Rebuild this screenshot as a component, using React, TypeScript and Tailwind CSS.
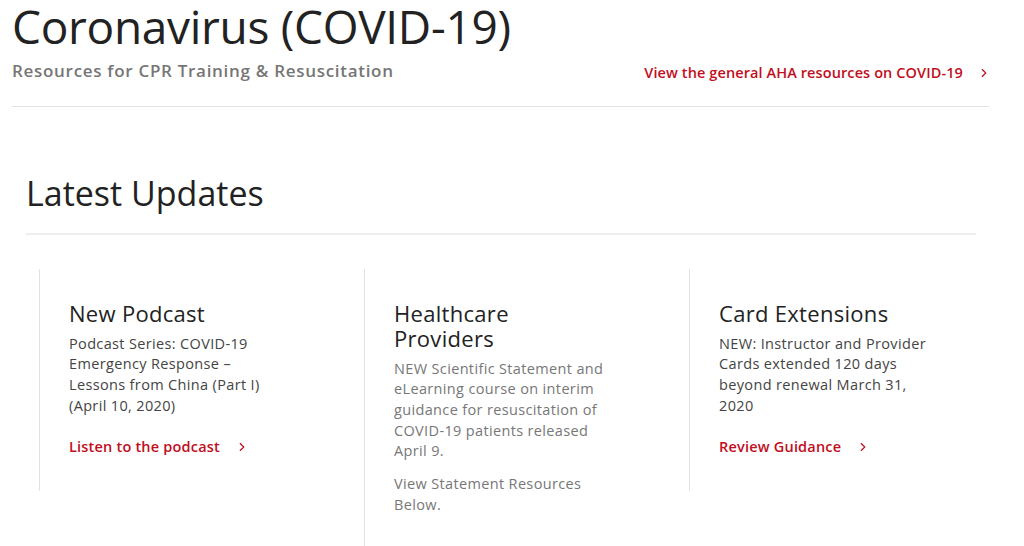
import { ChevronRight } from "lucide-react";

const font = { fontFamily: '"Open Sans", "Liberation Sans", sans-serif' };

const updates = [
  {
    title: "New Podcast",
    body: ["Podcast Series: COVID-19 Emergency Response – Lessons from China (Part I) (April 10, 2020)"],
    link: "Listen to the podcast",
    muted: false,
  },
  {
    title: "Healthcare Providers",
    body: [
      "NEW Scientific Statement and eLearning course on interim guidance for resuscitation of COVID-19 patients released April 9.",
      "View Statement Resources Below.",
    ],
    link: null,
    muted: true,
  },
  {
    title: "Card Extensions",
    body: ["NEW: Instructor and Provider Cards extended 120 days beyond renewal March 31, 2020"],
    link: "Review Guidance",
    muted: false,
  },
];

export default function App() {
  return (
    <div className="min-h-[546px] bg-white overflow-hidden" style={font}>
      {/* Page header */}
      <header className="mx-3 w-[977px] border-b border-[#e3e3e3] pb-[22px]">
        <h1 className="text-[46px] leading-[52px] text-[#222] tracking-[-0.3px]">Coronavirus (COVID-19)</h1>
        <div className="flex items-end justify-between mt-[6px]">
          <p className="text-[17px] font-semibold tracking-[0.7px] text-[#767676]">Resources for CPR Training &amp; Resuscitation</p>
          <a href="#" className="flex items-center gap-[14px] text-[14.5px] font-semibold tracking-[0.1px] text-[#c10e21] mr-[-2px]">
            View the general AHA resources on COVID-19
            <ChevronRight className="w-[14px] h-[14px]" strokeWidth={2} />
          </a>
        </div>
      </header>

      {/* Latest updates */}
      <section className="ml-[26px]">
        <div className="w-[950px] border-b-2 border-[#eeeeee] pt-[65px] pb-[19px]">
          <h2 className="text-[34px] leading-[42px] text-[#222]">Latest Updates</h2>
        </div>
        <div className="grid grid-cols-3 w-[975px] mt-[34px] ml-[13px] items-start">
          {updates.map((u) => (
            <div key={u.title} className="border-l border-[#e2e2e2] pl-[29px] pr-[80px] pt-[32px] pb-[33px]">
              <h3 className="text-[22px] leading-[25px] font-medium tracking-[0.3px] text-[#222] mb-[8px]">{u.title}</h3>
              {u.body.map((b, i) => (
                <p
                  key={i}
                  className={`text-[14.5px] leading-[20.7px] tracking-[0.35px] ${u.muted ? "text-[#777]" : "text-[#444]"} ${i > 0 ? "mt-[12px]" : ""}`}
                >
                  {b}
                </p>
              ))}
              {u.link && (
                <a href="#" className="flex items-center gap-[15px] mt-[20px] text-[14.5px] font-semibold tracking-[0.2px] text-[#c10e21]">
                  {u.link}
                  <ChevronRight className="w-[14px] h-[14px]" strokeWidth={2} />
                </a>
              )}
            </div>
          ))}
        </div>
      </section>
    </div>
  );
}
